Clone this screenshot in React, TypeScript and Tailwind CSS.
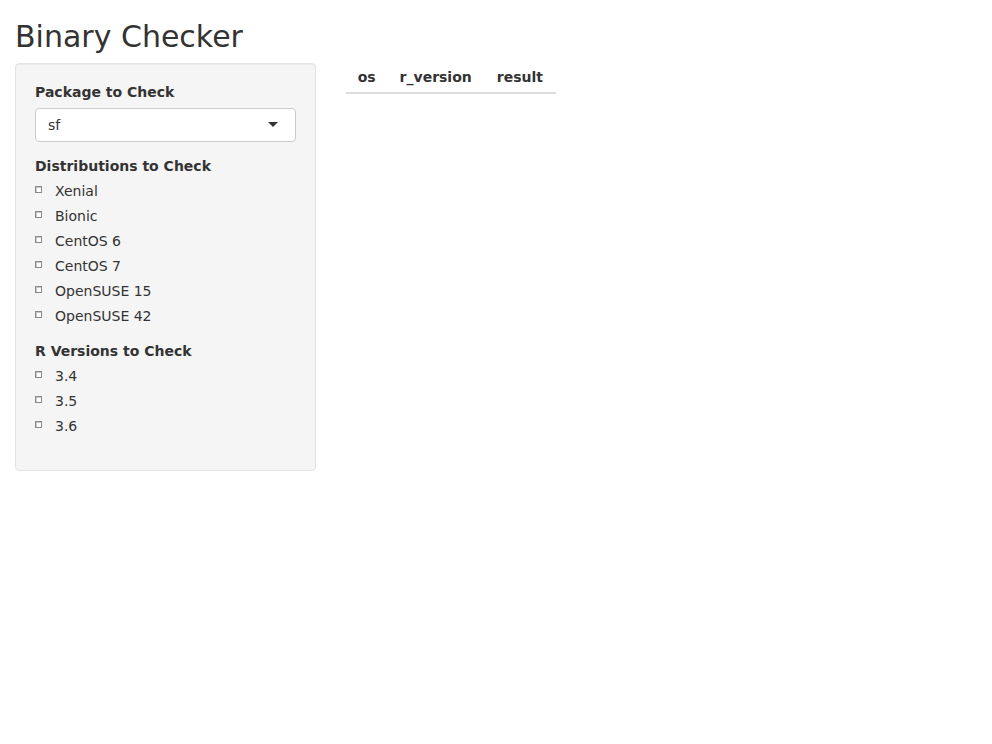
import React from 'react';

const distros = ['Xenial', 'Bionic', 'CentOS 6', 'CentOS 7', 'OpenSUSE 15', 'OpenSUSE 42'];
const rVersions = ['3.4', '3.5', '3.6'];

const CheckRow: React.FC<{ label: string }> = ({ label }) => (
  <label className="flex h-5 items-center pl-5 relative font-normal">
    <span className="absolute left-0 top-[5px] w-[7px] h-[7px] border border-[#8a8a8a] bg-white shadow-[inset_1px_1px_0_#c8c8c8]" />
    <span>{label}</span>
  </label>
);

const CheckGroup: React.FC<{ title: string; items: string[]; raise?: boolean }> = ({ title, items, raise }) => (
  <div className="mb-[15px]">
    <div className={`font-bold leading-5 relative ${raise ? '-top-px mb-1' : 'mb-[5px]'}`}>{title}</div>
    <div className="flex flex-col gap-[5px]">
      {items.map((it) => (
        <CheckRow key={it} label={it} />
      ))}
    </div>
  </div>
);

export default function App() {
  return (
    <div
      className="min-h-screen bg-white text-[#333] text-[14px] leading-5 px-[15px]"
      style={{ fontFamily: '"DejaVu Sans", sans-serif' }}
    >
      <h2 className="text-[30px] leading-[33px] pt-5 pb-[10px] font-normal">Binary Checker</h2>
      <div className="flex">
        <div className="w-[300.67px] shrink-0">
          <div className="bg-[#f5f5f5] border border-[#e3e3e3] rounded-[4px] p-[19px] shadow-[inset_0_1px_1px_rgba(0,0,0,0.05)]">
            <div className="mb-[15px]">
              <div className="font-bold leading-5 mb-[5px] relative -top-px">Package to Check</div>
              <div className="relative h-[34px] bg-white border border-[#ccc] rounded-[4px] px-3 flex items-center">
                <span>sf</span>
                <span className="absolute right-[17px] top-1/2 -mt-[3px] w-0 h-0 border-x-[5px] border-x-transparent border-t-[5px] border-t-[#333]" />
              </div>
            </div>
            <CheckGroup title="Distributions to Check" items={distros} raise />
            <CheckGroup title="R Versions to Check" items={rVersions} />
          </div>
        </div>
        <div className="ml-[30px]">
          <table className="border-collapse">
            <thead>
              <tr className="border-b-2 border-[#ddd]">
                <th className="px-3 pt-[4px] pb-[5px] text-left font-bold">os</th>
                <th className="px-3 pt-[4px] pb-[5px] text-left font-bold">r_version</th>
                <th className="pl-[13px] pr-[13px] pt-[4px] pb-[5px] text-left font-bold">result</th>
              </tr>
            </thead>
          </table>
        </div>
      </div>
    </div>
  );
}
